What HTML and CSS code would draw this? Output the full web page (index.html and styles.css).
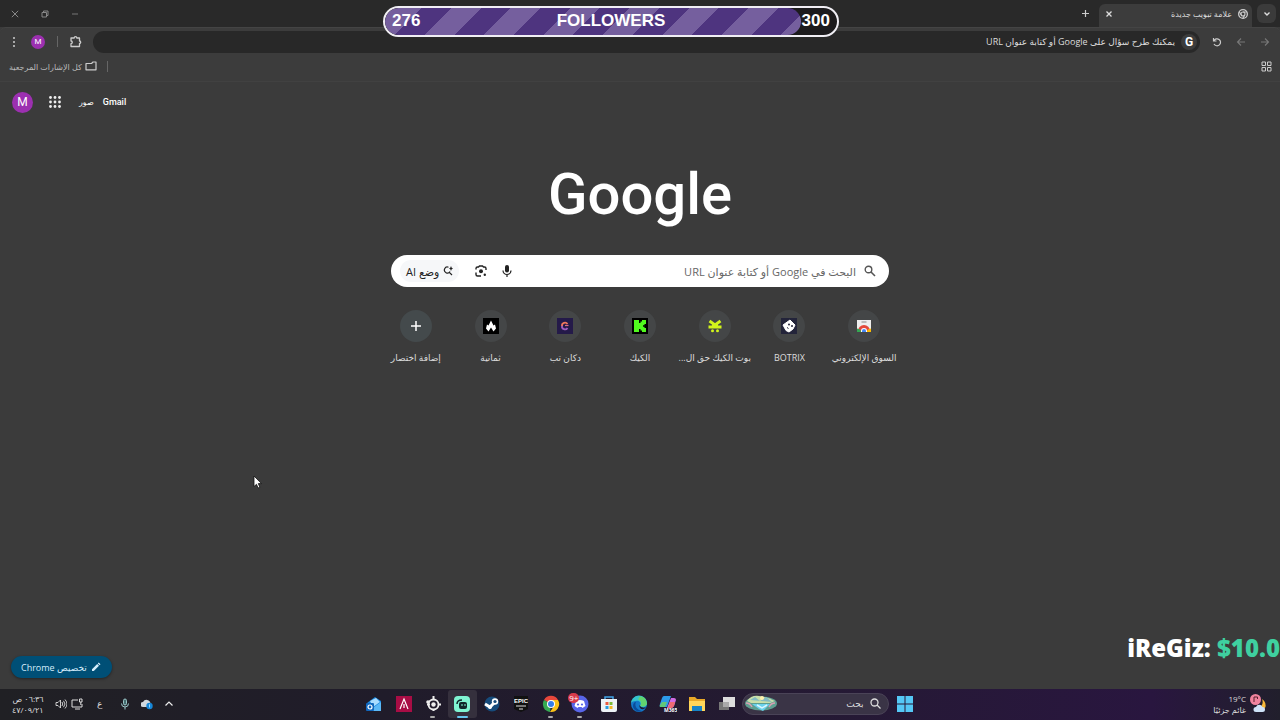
FILE: index.html
```html
<!DOCTYPE html>
<html lang="ar" dir="rtl">
<head>
    <meta charset="UTF-8">
    <title>علامة تبويب جديدة</title>
    <meta name="viewport" content="width=device-width, initial-scale=1">
    <link rel="stylesheet" href="styles.css">
</head>
<body>
    <!-- Tab strip -->
    <header class="tab-strip">
        <button class="tab-search" aria-label="البحث في علامات التبويب">
            <svg width="10" height="10" viewBox="0 0 10 10"><path d="M2.5 3.5 5 6l2.5-2.5" fill="none" stroke="#ddd" stroke-width="1.4"/></svg>
        </button>
        <div class="tab">
            <svg width="10" height="10" viewBox="0 0 20 20"><circle cx="10" cy="10" r="8.7" fill="none" stroke="#ccc" stroke-width="2.6"/><circle cx="10" cy="10" r="4" fill="none" stroke="#ccc" stroke-width="2.2"/><path d="M10 6h8M6.5 12 2.7 5.5M13.5 12 9.5 19" stroke="#ccc" stroke-width="2.2"/></svg>
            <span class="tab-title">علامة تبويب جديدة</span>
            <button class="icon-button small" aria-label="إغلاق">
                <svg width="8" height="8" viewBox="0 0 8 8"><path d="M1.5 1.5l5 5M6.5 1.5l-5 5" stroke="#ddd" stroke-width="1.3"/></svg>
            </button>
        </div>
        <button class="icon-button new-tab" aria-label="علامة تبويب جديدة">
            <svg width="9" height="9" viewBox="0 0 9 9"><path d="M4.5 1v7M1 4.5h7" stroke="#ccc" stroke-width="1.2"/></svg>
        </button>
        <div class="window-controls">
            <button aria-label="تصغير"><svg width="8" height="8" viewBox="0 0 8 8"><path d="M1 4h6" stroke="#777"/></svg></button>
            <button aria-label="استعادة"><svg width="8" height="8" viewBox="0 0 8 8"><path d="M1 2.5h4.5v4.5H1zM2.5 2.500V1H7v4.500H5.500" fill="none" stroke="#888"/></svg></button>
            <button aria-label="إغلاق النافذة"><svg width="8" height="8" viewBox="0 0 8 8"><path d="M.8.8l6.400 6.400M7.200.8.8 7.200" stroke="#888"/></svg></button>
        </div>
    </header>

    <!-- Toolbar -->
    <nav class="toolbar">
        <button class="icon-button" aria-label="إلى الأمام"><svg width="10" height="10" viewBox="0 0 10 10"><path d="M1 5h7.500M5 1.500 8.500 5 5 8.500" fill="none" stroke="#777" stroke-width="1.1"/></svg></button>
        <button class="icon-button" aria-label="رجوع"><svg width="10" height="10" viewBox="0 0 10 10"><path d="M9 5H1.500M5 1.500 1.500 5 5 8.500" fill="none" stroke="#777" stroke-width="1.1"/></svg></button>
        <button class="icon-button" aria-label="إعادة تحميل"><svg width="10" height="10" viewBox="0 0 10 10"><path d="M1.500 1v3h3M1.800 4A3.500 3.500 0 1 1 2 7" fill="none" stroke="#ccc" stroke-width="1.200"/></svg></button>
        <div class="address-bar">
            <span class="google-badge">G</span>
            <input type="text" aria-label="شريط العناوين" placeholder="يمكنك طرح سؤال على Google أو كتابة عنوان URL">
        </div>
        <button class="icon-button" aria-label="الإضافات"><svg width="13" height="13" viewBox="0 0 13 13"><path d="M2 3h3.200a1.300 1.300 0 0 1 2.600 0H10.500v3a1.200 1.200 0 0 1 0 2.400v3.100H2V8.600a1.300 1.300 0 0 0 0-2.600z" fill="none" stroke="#ccc" stroke-width="1.300" stroke-linejoin="round"/></svg></button>
        <span class="divider"></span>
        <button class="avatar avatar-small" aria-label="الملف الشخصي">M</button>
        <button class="icon-button" aria-label="القائمة"><svg width="4" height="12" viewBox="0 0 4 12" fill="#ccc"><circle cx="2" cy="2" r="1"/><circle cx="2" cy="6" r="1"/><circle cx="2" cy="10" r="1"/></svg></button>
    </nav>

    <!-- Bookmarks bar -->
    <div class="bookmarks">
        <button class="icon-button" aria-label="مجموعات علامات التبويب"><svg width="11" height="11" viewBox="0 0 11 11"><path d="M1 1h3.500v3.500H1zM6.500 1H10v3.500H6.500zM1 6.500h3.500V10H1zM6.500 6.500H10V10H6.500z" fill="none" stroke="#ccc"/></svg></button>
        <div class="bookmarks-end">
            <span class="divider"></span>
            <button class="bookmark-folder">
                <svg width="12" height="10" viewBox="0 0 12 10"><path d="M1 8.800V2.500h5.500L8 1h3v7.800z" fill="none" stroke="#ccc" stroke-width="1.200" stroke-linejoin="round"/></svg>
                <span>كل الإشارات المرجعية</span>
            </button>
        </div>
    </div>

    <!-- New tab page -->
    <main class="page">
        <div class="account-links">
            <a href="#">Gmail</a>
            <a href="#" class="images-link">صور</a>
            <button class="icon-button" aria-label="تطبيقات Google"><svg width="12" height="12" viewBox="0 0 12 12" fill="#eee"><circle cx="1.500" cy="1.500" r="1.400"/><circle cx="6" cy="1.500" r="1.400"/><circle cx="10.500" cy="1.500" r="1.400"/><circle cx="1.500" cy="6" r="1.400"/><circle cx="6" cy="6" r="1.400"/><circle cx="10.500" cy="6" r="1.400"/><circle cx="1.500" cy="10.500" r="1.400"/><circle cx="6" cy="10.500" r="1.400"/><circle cx="10.500" cy="10.500" r="1.400"/></svg></button>
            <button class="avatar" aria-label="حساب Google">M</button>
        </div>

        <h1 class="logo">Google</h1>

        <form class="search-box">
            <svg width="12" height="12" viewBox="0 0 12 12"><circle cx="4.500" cy="4.500" r="3.300" fill="none" stroke="#555" stroke-width="1.400"/><path d="M7 7l4 4" stroke="#555" stroke-width="1.600"/></svg>
            <input type="text" aria-label="بحث" placeholder="البحث في Google أو كتابة عنوان URL">
            <button type="button" class="icon-button" aria-label="البحث الصوتي"><svg width="12" height="14" viewBox="0 0 12 14"><rect x="4" y="1" width="4" height="7.500" rx="2" fill="#222"/><path d="M2 6.500a4 4 0 0 0 8 0M6 10.500V13" fill="none" stroke="#222" stroke-width="1.200"/></svg></button>
            <button type="button" class="icon-button" aria-label="البحث بالصور"><svg width="12" height="12" viewBox="0 0 12 12"><path d="M1 4.500V3.500A1.500 1.500 0 0 1 2.500 2h1L4.500 1h3l1 1h1A1.500 1.500 0 0 1 11 3.500V5M1 7.500v2A1.500 1.500 0 0 0 2.500 11H6" fill="none" stroke="#222" stroke-width="1.400"/><circle cx="6" cy="6.300" r="2" fill="#222"/><circle cx="9.800" cy="9.800" r="1.200" fill="#222"/></svg></button>
            <button type="button" class="ai-mode">
                <svg width="10" height="10" viewBox="0 0 10 10"><path d="M5.500 1.200A3 3 0 1 0 7 5.500M6.300 6.300 9 9" fill="none" stroke="#222" stroke-width="1.200"/><path d="M8 0l.7 1.800L10 2.500l-1.300.7L8 5l-.7-1.800L6 2.500l1.300-.7z" fill="#222"/></svg>
                <span>وضع AI</span>
            </button>
        </form>

        <div class="shortcuts">
            <a href="#" class="shortcut">
                <span class="shortcut-icon"><svg width="16" height="16" viewBox="0 0 16 16"><path d="M1 2h14v12H1z" fill="#eee"/><path d="M5.500 4h5" stroke="#888"/><path d="M2 13a6 6 0 0 1 12 0v1H2z" fill="#e3483b"/><path d="M1 10.500l3 1 1.500 2.500H1z" fill="#35a853"/><path d="M15 10.500l-3 1-1.500 2.500H15z" fill="#fbbc05"/><path d="M5 14v-1a3 3 0 0 1 6 0v1z" fill="#fff"/><path d="M6 14v-1a2 2 0 0 1 4 0v1z" fill="#4285f4"/></svg></span>
                <span class="shortcut-label">السوق الإلكتروني</span>
            </a>
            <a href="#" class="shortcut">
                <span class="shortcut-icon"><svg width="16" height="16" viewBox="0 0 16 16"><path d="M0 0h16v16H0z" fill="#23243a"/><path d="M2 7l7-5 5 5-2 4-4 3-3-1.500z" fill="#fff" stroke="#fff" stroke-linejoin="round"/><circle cx="8" cy="6.500" r="1" fill="#23243a"/><circle cx="11" cy="8" r="1" fill="#23243a"/><path d="M6 9.500l1.500 1" stroke="#23243a"/></svg></span>
                <span class="shortcut-label">BOTRIX</span>
            </a>
            <a href="#" class="shortcut">
                <span class="shortcut-icon"><svg width="16" height="16" viewBox="0 0 16 16"><path d="M2.500 3 8 7l5.500-4M1.500 9h13" fill="none" stroke="#d2f51b" stroke-width="2.800"/><path d="M5 6h6v4H5z" fill="#d2f51b"/><circle cx="5.500" cy="12.800" r="1.500" fill="#d2f51b"/><circle cx="10.500" cy="12.800" r="1.500" fill="#d2f51b"/></svg></span>
                <span class="shortcut-label">بوت الكيك حق ال...</span>
            </a>
            <a href="#" class="shortcut">
                <span class="shortcut-icon"><svg width="16" height="16" viewBox="0 0 16 16"><path d="M0 0h16v16H0z" fill="#000"/><path d="M2 2h5v3h1.500V3.500H10V2h4v4h-1.500v1.200H11v1.600h1.500V10H14v4h-4v-1.500H8.500V11H7v3H2z" fill="#50fa1e"/></svg></span>
                <span class="shortcut-label">الكيك</span>
            </a>
            <a href="#" class="shortcut">
                <span class="shortcut-icon"><svg width="16" height="16" viewBox="0 0 16 16"><path d="M0 0h16v16H0z" fill="#241a49"/><path d="M10.500 6A3 3 0 0 0 5 8" fill="none" stroke="#ef775b" stroke-width="1.800"/><path d="M5 8a3 3 0 0 0 5.500 2" fill="none" stroke="#a05dc0" stroke-width="1.800"/><path d="M8 7.500h3.500" stroke="#da6c83" stroke-width="1.200"/></svg></span>
                <span class="shortcut-label">دكان تب</span>
            </a>
            <a href="#" class="shortcut">
                <span class="shortcut-icon"><svg width="16" height="16" viewBox="0 0 16 16"><path d="M0 0h16v16H0z" fill="#000"/><path d="M8 2.500l2.500 5L12 6.500l1 4-2.500 3L8 9.500l-2.500 4-2.500-3 1-4 1.500 1z" fill="#fff"/></svg></span>
                <span class="shortcut-label">ثمانية</span>
            </a>
            <button type="button" class="shortcut">
                <span class="shortcut-icon add"><svg width="12" height="12" viewBox="0 0 12 12"><path d="M6 1v10M1 6h10" stroke="#fff" stroke-width="1.500"/></svg></span>
                <span class="shortcut-label">إضافة اختصار</span>
            </button>
        </div>

        <button class="customize">
            <svg width="10" height="10" viewBox="0 0 10 10" fill="#d5edfb"><path d="M1 7.200 6.200 2 8 3.800 2.800 9H1zM6.800 1.400 7.700.5l1.800 1.800-.9.9z"/></svg>
            <span>تخصيص Chrome</span>
        </button>
    </main>

    <!-- Taskbar -->
    <footer class="taskbar">
        <div class="weather">
            <svg width="18" height="20" viewBox="0 0 18 20"><path d="M12 5a7 7 0 0 1-6 10 6.500 6.500 0 0 0 9-1 7 7 0 0 0-3-9z" fill="#f8b938"/><path d="M6 18a2.500 2.500 0 0 1 0-5 3.500 3.500 0 0 1 6.500 0 2.500 2.500 0 0 1 0 5z" fill="#cfe3f8"/><circle cx="5.500" cy="5.500" r="5.500" fill="#f0839e"/><path d="M4 8V3h3.500v2" fill="none" stroke="#58202f"/></svg>
            <div class="weather-text">
                <span dir="ltr">19°C</span>
                <span>غائم جزئيًا</span>
            </div>
        </div>

        <div class="taskbar-center">
            <button class="start" aria-label="ابدأ"><svg width="16" height="16" viewBox="0 0 16 16"><path d="M0 0h7.500v7.500H0zM8.500 0H16v7.500H8.500zM0 8.500h7.500V16H0zM8.500 8.500H16V16H8.500z" fill="#55c8f6"/></svg></button>
            <div class="task-search">
                <svg width="11" height="11" viewBox="0 0 11 11"><circle cx="4.500" cy="4.500" r="3.500" fill="none" stroke="#ddd" stroke-width="1.300"/><path d="M7 7l3.500 3.500" stroke="#ddd" stroke-width="1.300"/></svg>
                <input type="text" aria-label="بحث" placeholder="بحث">
                <svg width="32" height="17" viewBox="0 0 32 17"><ellipse cx="16" cy="8.500" rx="16" ry="7" fill="#5e9f91"/><path d="M2 6Q6 0 14 1t16 5l-5 2H6z" fill="#c8dfaa"/><path d="M5 5l5-3 5 4 6-4 6 5z" fill="#83bbc2"/><circle cx="17" cy="3" r="2" fill="#fff0ad"/><path d="M7 9h18l-7 7-4-2z" fill="#6bd2ed"/><path d="M12 10l5 3 5-3" fill="none" stroke="#dbf7ff" stroke-width="1.500"/><path d="M1 8q4 0 6 4M30 8q-4 0-6 4" fill="none" stroke="#d89fb2" stroke-width="1.500"/></svg>
            </div>
            <div class="apps">
                <button aria-label="عرض المهام"><svg width="16" height="16" viewBox="0 0 16 16"><path d="M0 6h10v8H0z" fill="#777"/><path d="M4 1h12v10H4z" fill="#ddd"/><path d="M4 6h6v5H4z" fill="#aaa"/></svg></button>
                <button aria-label="مستكشف الملفات"><svg width="18" height="18" viewBox="0 0 18 18"><path d="M1 2h6l2 2h8v12H1z" fill="#e8a928"/><path d="M1 6h16v10H1z" fill="#ffd65a"/><path d="M4 11h10v5H4z" fill="#1684c8"/></svg></button>
                <button aria-label="Microsoft 365"><svg width="18" height="18" viewBox="0 0 18 18"><path d="M5 1h7L8 12H2q-2 0-1-3l2-6q.7-2 2-2z" fill="#2c9bea"/><path d="M3 7h5l-2 5H2q-2 0-1-2z" fill="#61c879"/><path d="M12 3h3q2 0 2 2l-2 6q-1 2-3 2H8z" fill="#d06ce4"/><path d="M11 7h5l-1 4-2 2H9z" fill="#ed6a72"/><text x="5" y="17" class="m365-text">M365</text></svg></button>
                <button aria-label="Edge"><svg width="18" height="18" viewBox="0 0 18 18"><circle cx="9" cy="9" r="8" fill="#1478ca"/><path d="M1 9a8 8 0 0 1 16-1c0 4-4 5-7 3 2-3-1-6-4-5-3 0-5 1-5 3z" fill="#35c3cd"/><path d="M10 1.200a8 8 0 0 1 7 7c0 3-4 4-7 3 2-3 1-6-2-7z" fill="#62d46f"/><path d="M6 7c-2 4 1 8 6 9-5 2-9-2-9-5 0-2 1-4 3-4z" fill="#0b4c9b"/><path d="M9 10q3 4 7 2-3 4-6 1z" fill="#221b30"/></svg></button>
                <button aria-label="Microsoft Store"><svg width="16" height="18" viewBox="0 0 16 18"><path d="M4 5V2h8v3" fill="none" stroke="#42a5e9" stroke-width="1.500"/><path d="M0 4h16v11q0 2-2 2H2q-2 0-2-2z" fill="#edf2f6"/><path d="M4.500 7h3v3h-3z" fill="#eb5b40"/><path d="M8.500 7h3v3h-3z" fill="#7dba38"/><path d="M4.500 11h3v3h-3z" fill="#299de0"/><path d="M8.500 11h3v3h-3z" fill="#f4b827"/></svg></button>
                <button class="running" aria-label="Discord"><svg width="18" height="18" viewBox="0 0 18 18"><circle cx="9" cy="9" r="8.500" fill="#5865e8"/><path d="M5 6q4-2 8 0l1.500 5-3 2-1-1H7.500l-1 1-3-2z" fill="#fff"/><circle cx="7" cy="9.500" r="1.100" fill="#5865e8"/><circle cx="11" cy="9.500" r="1.100" fill="#5865e8"/></svg><span class="badge" dir="ltr">9+</span></button>
                <button class="running" aria-label="Chrome"><svg width="18" height="18" viewBox="0 0 18 18"><path d="M9 9 2 5a8 8 0 0 1 14 0z" fill="#e8473b"/><path d="M9 9 2 5a8 8 0 0 0 6 12z" fill="#36a952"/><path d="M9 5h7a8 8 0 0 1-8 12l4-6z" fill="#fbc218"/><circle cx="9" cy="9" r="4" fill="#fff"/><circle cx="9" cy="9" r="3" fill="#367ee8"/></svg></button>
                <button aria-label="Epic Games"><svg width="14" height="16" viewBox="0 0 14 16"><path d="M0 0h14v13l-7 3-7-3z" fill="#111"/><text x="7" y="7" class="epic-text">EPIC</text><path d="M2 10h10M5 13h4" stroke="#ddd"/></svg></button>
                <button aria-label="Steam"><svg width="16" height="16" viewBox="0 0 16 16"><circle cx="8" cy="8" r="7.500" fill="#164b7b"/><path d="M1 8l5 3 6-6" stroke="#fff" stroke-width="3" fill="none"/><circle cx="11" cy="5.500" r="3.200" fill="#fff"/><circle cx="11" cy="5.500" r="1.600" fill="#164b7b"/><circle cx="6" cy="11" r="2" fill="#fff"/></svg></button>
                <button class="running active" aria-label="Streamlabs"><svg width="16" height="16" viewBox="0 0 16 16"><rect width="16" height="16" rx="4" fill="#80f5d2"/><rect x="5" y="6" width="8" height="7" rx="2" fill="#10272a"/><path d="M3 8q0-4 5-4" fill="none" stroke="#10272a" stroke-width="1.500"/><path d="M8 8v2M11 8v2" stroke="#80f5d2"/></svg></button>
                <button class="running" aria-label="SteelSeries"><svg width="16" height="16" viewBox="0 0 16 16"><circle cx="8.500" cy="8.500" r="5" fill="none" stroke="#eee" stroke-width="1.800"/><circle cx="8.500" cy="8.500" r="2.200" fill="#eee"/><path d="M8.500 0v4M13 8.500h3M8.500 13v2M2 8.500h3" stroke="#eee" stroke-width="2"/><circle cx="3" cy="6" r="1.800" fill="#eee"/></svg></button>
                <button aria-label="Armoury"><svg width="16" height="16" viewBox="0 0 16 16"><path d="M0 0h16v16H0z" fill="#a80d45"/><path d="M4 13 8 3l4 10M8 8v4" fill="none" stroke="#fff" stroke-width="1.200"/></svg></button>
                <button aria-label="Outlook"><svg width="16" height="16" viewBox="0 0 16 16"><path d="M1 7 9 1l6 4v10H3z" fill="#1686df"/><path d="M4 5l6-3 4 4-7 5z" fill="#a8dcff"/><path d="M4 14l11-8v9H4z" fill="#5bb8f6"/><rect y="7" width="8" height="8" rx="1" fill="#1167bd"/><circle cx="4" cy="11" r="2" fill="none" stroke="#fff" stroke-width="1.200"/></svg></button>
            </div>
        </div>

        <div class="tray">
            <button aria-label="إظهار الرموز المخفية"><svg width="10" height="10" viewBox="0 0 10 10"><path d="M1.500 6.500 5 3l3.500 3.500" fill="none" stroke="#eee" stroke-width="1.200"/></svg></button>
            <button aria-label="OneDrive"><svg width="12" height="12" viewBox="0 0 12 12"><path d="M2 9a2.500 2.500 0 0 1 0-5 4 4 0 0 1 7.500 1.500V9z" fill="#d2d9df"/><circle cx="8.500" cy="8" r="3.200" fill="#1687d8"/><path d="M8.500 6.300v3.200" stroke="#9ad7ff"/></svg></button>
            <button aria-label="الميكروفون"><svg width="10" height="12" viewBox="0 0 10 12"><rect x="3.500" y="1" width="3" height="6" rx="1.500" fill="#456d70" stroke="#9bc7c9"/><path d="M1.500 5.500a3.500 3.500 0 0 0 7 0M5 9v2.500" fill="none" stroke="#9bc7c9"/></svg></button>
            <button class="language">ع</button>
            <button class="system" aria-label="الشبكة والصوت">
                <svg width="12" height="12" viewBox="0 0 12 12"><path d="M7 2H1v7h10V6M4 11h5" fill="none" stroke="#ddd"/><path d="M8.500 1h2.500v3H8.500zM9.800 4v3" fill="none" stroke="#ddd"/></svg>
                <svg width="12" height="12" viewBox="0 0 12 12"><path d="M1 4.500h2L5.500 2v8L3 7.500H1zM7 4q1.500 2 0 4M8.500 2.800q3 3.200 0 6.400M10 1.500q4 4.500 0 9" fill="none" stroke="#ddd" stroke-width=".9"/></svg>
            </button>
            <div class="clock"><span>٠٦:٣٦ ص</span><span>٤٧/٠٩/٢١</span></div>
        </div>
    </footer>

    <!-- Stream overlays -->
    <div class="followers" dir="ltr">
        <div class="followers-fill"></div>
        <span>276</span>
        <span>FOLLOWERS</span>
        <span>300</span>
    </div>
    <div class="tip" dir="ltr">iReGiz: <span class="tip-amount">$10.0</span></div>
    <svg class="cursor" width="9" height="14" viewBox="0 0 9 14"><path d="M1 1v10.500l2.500-2.200 1.600 3.700 1.800-.8-1.600-3.600H8.500z" fill="#fff" stroke="#111" stroke-width=".8"/></svg>
</body>
</html>
```
FILE: styles.css
```css
* {
    box-sizing: border-box;
}
body {
    margin: 0;
    min-height: 100vh;
    display: flex;
    flex-direction: column;
    position: relative;
    overflow: hidden;
    background-color: #3b3b3b;
    color: #ddd;
    font-family: "Open Sans", "DejaVu Sans", sans-serif;
    font-size: 9px;
}
button, input {
    font: inherit;
    color: inherit;
    background: none;
    border: none;
    padding: 0;
    margin: 0;
}
button {
    cursor: pointer;
}
a {
    color: inherit;
    text-decoration: none;
}
svg {
    display: block;
    flex: none;
}
input {
    flex: 1;
    min-width: 0;
    outline: none;
}
input::placeholder {
    color: inherit;
    opacity: 1;
}
.icon-button {
    width: 24px;
    height: 20px;
    flex: none;
    display: flex;
    align-items: center;
    justify-content: center;
}
.divider {
    width: 1px;
    height: 11px;
    background-color: #666;
}

/* Tab strip */
.tab-strip {
    height: 27px;
    flex: none;
    display: flex;
    align-items: center;
    padding-right: 4px;
    background-color: #292929;
}
.tab-search {
    width: 19px;
    height: 19px;
    display: flex;
    align-items: center;
    justify-content: center;
    border-radius: 6px;
    background-color: #3b3b3b;
}
.tab {
    width: 153px;
    height: 23px;
    align-self: flex-end;
    margin-right: 5px;
    padding: 0 4px 4px 0;
    display: flex;
    align-items: center;
    gap: 6px;
    border-radius: 6px 6px 0 0;
    background-color: #3c3c3c;
}
.tab-title {
    flex: 1;
    font-size: 8px;
}
.small {
    width: 20px;
}
.new-tab {
    margin-right: 2px;
}
.window-controls {
    margin-right: auto;
    display: flex;
}
.window-controls button {
    width: 30px;
    height: 26px;
    display: flex;
    align-items: center;
    justify-content: center;
}

/* Toolbar */
.toolbar {
    height: 28px;
    flex: none;
    display: flex;
    align-items: center;
    padding: 0 3px 0 2px;
    border-top: 1px solid #444;
    border-radius: 6px 6px 0 0;
    background-color: #3c3c3c;
}
.toolbar .divider {
    margin-right: 5px;
}
.address-bar {
    flex: 1;
    height: 22px;
    margin: 0 5px 0 6px;
    padding: 0 3px;
    display: flex;
    align-items: center;
    gap: 6px;
    border-radius: 11px;
    background-color: #282828;
}
.google-badge {
    width: 16px;
    height: 16px;
    display: flex;
    align-items: center;
    justify-content: center;
    border-radius: 50%;
    background-color: #3c3c3c;
    color: #fff;
    font-family: Roboto, sans-serif;
    font-size: 12px;
    font-weight: 700;
}
.avatar {
    width: 21px;
    height: 21px;
    border-radius: 50%;
    background-color: #9c30b0;
    color: #fff;
    font-family: Roboto, sans-serif;
    font-size: 12px;
    text-align: center;
}
.avatar-small {
    width: 14px;
    height: 14px;
    margin: 0 12px 0 5px;
    font-size: 8px;
}

/* Bookmarks bar */
.bookmarks {
    height: 27px;
    flex: none;
    display: flex;
    align-items: center;
    justify-content: space-between;
    padding: 0 2px 4px 9px;
    border-bottom: 1px solid #414141;
    background-color: #3c3c3c;
}
.bookmarks-end, .bookmark-folder {
    display: flex;
    align-items: center;
    gap: 10px;
}
.bookmark-folder {
    gap: 3px;
    color: #bbb;
    font-size: 8px;
}

/* New tab page */
.page {
    flex: 1;
    display: flex;
    flex-direction: column;
    align-items: center;
}
.account-links {
    align-self: flex-end;
    height: 40px;
    padding-left: 12px;
    display: flex;
    align-items: center;
    color: #fff;
    font-family: Roboto, "DejaVu Sans", sans-serif;
    font-weight: 500;
}
.account-links .images-link {
    margin: 0 9px 0 12px;
    font-size: 8px;
}
.account-links .avatar {
    margin-right: 10px;
    font-weight: 400;
}
.logo {
    margin: 32px 0 0;
    height: 101px;
    color: #fff;
    font-family: Roboto, sans-serif;
    font-size: 58px;
    font-weight: 500;
    line-height: 80px;
}
.search-box {
    width: 498px;
    max-width: 100%;
    height: 32px;
    padding: 0 13px 0 9px;
    display: flex;
    align-items: center;
    gap: 2px;
    border-radius: 16px;
    background-color: #fff;
    color: #222;
    font-size: 11px;
}
.search-box input {
    margin-right: 6px;
    color: #666;
}
.ai-mode {
    height: 22px;
    margin-right: 8px;
    padding: 0 6px;
    display: flex;
    align-items: center;
    gap: 4px;
    border-radius: 11px;
    background-color: #f6f7f9;
}
.shortcuts {
    width: 523px;
    max-width: 100%;
    margin-top: 23px;
    display: grid;
    grid-template-columns: repeat(7, 1fr);
}
.shortcut {
    display: flex;
    flex-direction: column;
    align-items: center;
    gap: 10px;
    white-space: nowrap;
}
.shortcut-icon {
    width: 32px;
    height: 32px;
    display: flex;
    align-items: center;
    justify-content: center;
    border-radius: 50%;
    background-color: #444647;
}
.add {
    background-color: #444a4c;
}
.shortcut-label {
    line-height: 12px;
}
.customize {
    align-self: flex-end;
    height: 22px;
    margin: auto 11px 11px 11px;
    padding: 0 11px 0 10px;
    display: flex;
    align-items: center;
    gap: 4px;
    border-radius: 11px;
    background-color: #004f76;
    color: #d5edfb;
    box-shadow: 0 1px 3px rgba(0, 0, 0, 0.4);
}

/* Taskbar */
.taskbar {
    height: 31px;
    flex: none;
    padding-bottom: 2px;
    display: grid;
    grid-template-columns: 1fr auto 1fr;
    align-items: center;
    background: linear-gradient(to right, #202024, #201c2a 30%, #241a32 60%, #29163f 90%, #211f2c);
}
.weather {
    padding-right: 12px;
    display: flex;
    align-items: center;
    gap: 4px;
}
.weather-text, .clock {
    display: flex;
    flex-direction: column;
    line-height: 11px;
    font-size: 8px;
}
.weather-text span {
    text-align: right;
}
.taskbar-center {
    display: flex;
    align-items: center;
}
.start {
    width: 32px;
    height: 28px;
    display: flex;
    align-items: center;
    justify-content: center;
}
.task-search {
    width: 147px;
    height: 22px;
    padding: 0 7px 0 2px;
    display: flex;
    align-items: center;
    gap: 6px;
    border: 1px solid #4a4357;
    border-radius: 11px;
    background-color: #3a3446;
}
.apps {
    width: 382px;
    display: grid;
    grid-template-columns: repeat(13, 1fr);
}
.apps button {
    height: 28px;
    display: flex;
    align-items: center;
    justify-content: center;
    position: relative;
}
.apps .running::after {
    content: "";
    width: 5px;
    height: 2px;
    position: absolute;
    bottom: 0;
    border-radius: 1px;
    background-color: #aaa;
}
.apps .active {
    border-radius: 3px;
    background-color: #35303d;
}
.apps .active::after {
    width: 11px;
    background-color: #67c8f0;
}
.badge {
    position: absolute;
    top: 3px;
    left: 3px;
    padding: 0 1px;
    border-radius: 5px;
    background-color: #d83b4b;
    color: #fff;
    font-size: 8px;
    line-height: 10px;
}
.m365-text {
    direction: ltr;
    fill: #fff;
    font-size: 5px;
    font-weight: 700;
}
.epic-text {
    direction: ltr;
    fill: #fff;
    font-family: "Liberation Sans", sans-serif;
    font-size: 6px;
    font-weight: 700;
    text-anchor: middle;
}
.tray {
    padding-left: 12px;
    display: flex;
    align-items: center;
    justify-content: flex-end;
}
.tray button {
    width: 22px;
    height: 28px;
    display: flex;
    align-items: center;
    justify-content: center;
}
.tray .language {
    width: 28px;
}
.tray .system {
    width: 34px;
    gap: 4px;
}
.clock {
    margin-right: 8px;
}

/* Stream overlays */
.followers {
    width: 456px;
    height: 31px;
    position: absolute;
    top: 6px;
    left: 50%;
    margin-left: -257px;
    padding: 0 7px 1px;
    display: flex;
    align-items: center;
    justify-content: space-between;
    border: 2px solid #f0eef4;
    border-radius: 16px;
    background-color: #1c1b1d;
    color: #fff;
    font-family: "Liberation Sans", Arial, sans-serif;
    font-size: 17px;
    font-weight: 700;
    overflow: hidden;
}
.followers span {
    position: relative;
}
.followers-fill {
    width: 92%;
    position: absolute;
    top: 0;
    bottom: 0;
    left: 0;
    border-radius: 14px;
    background: repeating-linear-gradient(135deg, #4e347f 0 5px, #755f9e 5px 26px, #4e347f 26px 42px);
}
.tip {
    position: absolute;
    right: 0;
    bottom: 54px;
    color: #fff;
    font-size: 24px;
    font-weight: 800;
    line-height: 36px;
}
.tip-amount {
    color: #3fd0a0;
}
.cursor {
    position: absolute;
    top: 475px;
    left: 253px;
}
```
